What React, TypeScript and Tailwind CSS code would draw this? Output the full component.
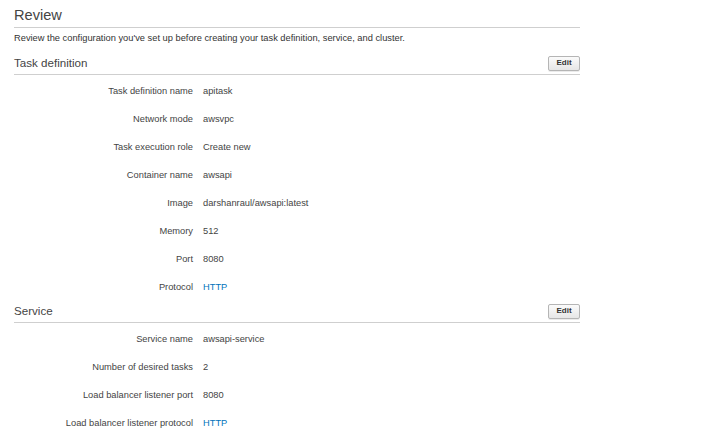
import React from 'react';

type Row = { label: string; value: string; link?: boolean };

const taskRows: Row[] = [
    { label: 'Task definition name', value: 'apitask' },
    { label: 'Network mode', value: 'awsvpc' },
    { label: 'Task execution role', value: 'Create new' },
    { label: 'Container name', value: 'awsapi' },
    { label: 'Image', value: 'darshanraul/awsapi:latest' },
    { label: 'Memory', value: '512' },
    { label: 'Port', value: '8080' },
    { label: 'Protocol', value: 'HTTP', link: true },
];

const serviceRows: Row[] = [
    { label: 'Service name', value: 'awsapi-service' },
    { label: 'Number of desired tasks', value: '2' },
    { label: 'Load balancer listener port', value: '8080' },
    { label: 'Load balancer listener protocol', value: 'HTTP', link: true },
];

const SectionHeader = ({ title, className = '' }: { title: string; className?: string }) => (
    <div className={`h-[23px] flex items-center justify-between border-b border-[#cfcfcf] ${className}`}>
        <h2 className="text-[11.6px] leading-[14px] text-[#444]">{title}</h2>
        <button className="w-[32px] h-[15px] rounded-[2px] border border-[#b5b5b5] bg-gradient-to-b from-[#fbfbfb] to-[#e6e6e6] text-[8px] font-bold leading-none text-[#333] shadow-[0_1px_0_rgba(0,0,0,0.08)]">
            Edit
        </button>
    </div>
);

const Rows = ({ rows }: { rows: Row[] }) => (
    <div className="mt-[1px]">
        {rows.map((r) => (
            <div key={r.label} className="h-[28px] pt-[2px] grid grid-cols-[179px_1fr] gap-x-[10px] items-center text-[9.3px] leading-[12px]">
                <span className="text-right text-[#444]">{r.label}</span>
                <span className={r.link ? 'text-[#0073bb]' : 'text-[#444]'}>{r.value}</span>
            </div>
        ))}
    </div>
);

export default function App() {
    return (
        <div className="w-[724px] h-[434px] bg-white overflow-hidden font-['Liberation_Sans',Arial,sans-serif]">
            <div className="ml-[14px] w-[566px]">
                {/* Page title */}
                <h1 className="pt-[6px] pb-[3px] text-[14.6px] leading-[18px] text-[#444] border-b border-[#cfcfcf]">Review</h1>
                <p className="mt-[4px] text-[9.3px] leading-[12px] text-[#333]">
                    Review the configuration you've set up before creating your task definition, service, and cluster.
                </p>

                <SectionHeader title="Task definition" className="mt-[8px]" />
                <Rows rows={taskRows} />

                <SectionHeader title="Service" />
                <Rows rows={serviceRows} />
            </div>
        </div>
    );
}
